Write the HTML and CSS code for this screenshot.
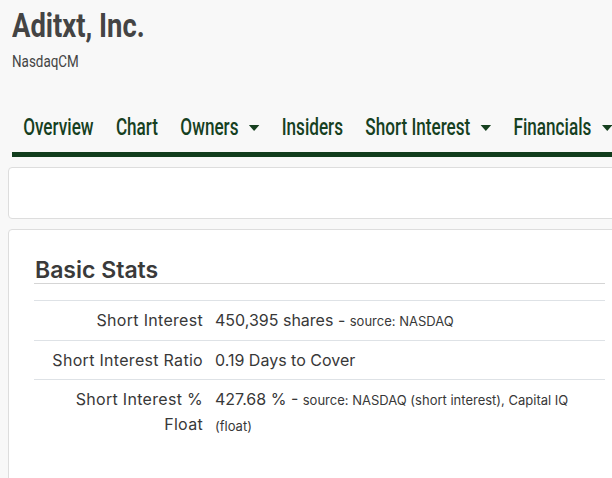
FILE: index.html
```html
<!DOCTYPE html>
<html lang="en">
<head>
    <meta charset="UTF-8">
    <meta name="viewport" content="width=device-width, initial-scale=1.0">
    <title>Aditxt, Inc. - Short Interest</title>
    <link rel="stylesheet" href="styles.css">
</head>
<body>

<div class="page">
    <header class="company">
        <h1 class="company-name">Aditxt, Inc.</h1>
        <div class="exchange">NasdaqCM</div>
    </header>

    <nav class="tabs">
        <ul>
            <li><a href="#">Overview</a></li>
            <li><a href="#">Chart</a></li>
            <li><a href="#" class="dropdown">Owners</a></li>
            <li><a href="#">Insiders</a></li>
            <li><a href="#" class="dropdown">Short Interest</a></li>
            <li><a href="#" class="dropdown">Financials</a></li>
        </ul>
    </nav>

    <div class="card card-empty"></div>

    <div class="card">
        <h3 class="card-title">Basic Stats</h3>
        <table class="stats">
            <tr>
                <td class="stat-label">Short Interest</td>
                <td>450,395 shares - <small>source: NASDAQ</small></td>
            </tr>
            <tr>
                <td class="stat-label">Short Interest Ratio</td>
                <td>0.19 Days to Cover</td>
            </tr>
            <tr>
                <td class="stat-label">Short Interest % Float</td>
                <td>427.68 % - <small>source: NASDAQ (short interest), Capital IQ (float)</small></td>
            </tr>
        </table>
    </div>
</div>

</body>
</html>
```

FILE: styles.css
```css
body {
    margin: 0;
    background: #f8f8f8;
    font-family: Inter, "Open Sans", sans-serif;
    color: #333;
    overflow: hidden;
}
.page {
    width: 640px;
}
/* no condensed face installed, so the narrow headline look is squeezed with scaleX */
.company {
    padding: 7px 0 0 12px;
    color: #444;
    font-family: Roboto, sans-serif;
}
.company-name {
    margin: 0;
    font-size: 33px;
    line-height: 38px;
    font-weight: bold;
    transform: scaleX(0.83);
    transform-origin: left;
}
.exchange {
    margin-top: 6px;
    font-size: 17px;
    line-height: 20px;
    transform: scaleX(0.79);
    transform-origin: left;
}
.tabs {
    margin: 38px 0 0 12px;
    border-bottom: 5px solid #113d1c;
    font-family: Roboto, sans-serif;
}
.tabs ul {
    list-style: none;
    margin: 0;
    padding: 0 0 0 15px;
    display: flex;
    gap: 30px;
    transform: scaleX(0.745);
    transform-origin: left;
}
.tabs a {
    display: flex;
    align-items: center;
    padding: 6px 0 11px;
    font-size: 23px;
    line-height: 26px;
    font-weight: 500;
    color: #16401f;
    text-decoration: none;
    white-space: nowrap;
}
.tabs a.dropdown::after {
    content: "";
    margin-left: 14px;
    border-top: 6px solid #16401f;
    border-left: 7.5px solid transparent;
    border-right: 7.5px solid transparent;
}
.card {
    margin: 10px 0 0 8px;
    width: 624px;
    background: #fff;
    border: 1px solid #ddd;
    border-radius: 4px;
    padding: 27px 26px 60px 25px;
    box-sizing: border-box;
}
.card-empty {
    height: 52px;
    padding: 0;
}
.card-title {
    margin: 0 0 16px;
    padding-left: 1px;
    font-size: 23px;
    line-height: 26px;
    font-weight: 600;
    color: #3a3a3a;
    border-bottom: 1px solid #d5d5d5;
}
.stats {
    width: 100%;
    border-collapse: collapse;
    font-size: 16px;
    line-height: 25px;
    color: #383838;
}
.stats td {
    border-top: 1px solid #dee2e6;
    padding: 7px 6px 6px;
    vertical-align: top;
}
.stats .stat-label {
    width: 163px;
    text-align: right;
    letter-spacing: 0.3px;
}
.stats small {
    font-size: 13px;
}
```
